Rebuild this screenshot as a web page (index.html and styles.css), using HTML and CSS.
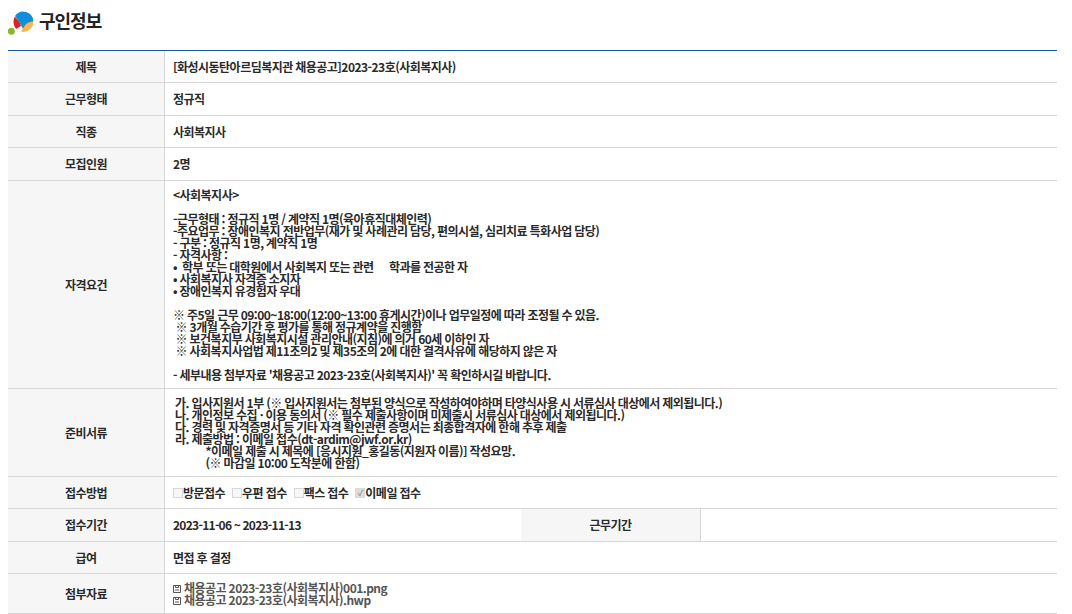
FILE: index.html
```html
<!DOCTYPE html>
<html lang="ko">
<head>
<meta charset="utf-8">
<title>구인정보</title>
<link rel="stylesheet" href="styles.css">
</head>
<body>
<h1 class="title">
<svg class="logo" width="28" height="26" viewBox="0 0 28 26"><circle cx="3.300" cy="20.300" r="3.500" fill="#8db52f"/><circle cx="15.300" cy="11" r="10" fill="#fbb450"/><path d="M7 5A10 10 0 0 1 25.300 10.500C20 10 16.500 14 15 18 13 13 10 9 7 5Z" fill="#0f8fdc"/><path d="M6.500 6C5 10 5.500 15 8.500 18 10 18 12 17.500 13 15 12 11 9 8 6.500 6Z" fill="#d9202c"/><path d="M8 18C9.500 19.500 11.500 20.700 13 21 13.500 19 14 18 15 18L13 15Z" fill="#fff"/></svg>
<span>구인정보</span>
</h1>
<table class="info">
<colgroup><col class="c1"><col class="c2"><col class="c3"><col class="c4"></colgroup>
<tbody>
<tr class="r32"><th>제목</th><td colspan="3">[화성시동탄아르딤복지관 채용공고]2023-23호(사회복지사)</td></tr>
<tr class="r33"><th>근무형태</th><td colspan="3">정규직</td></tr>
<tr class="r32"><th>직종</th><td colspan="3">사회복지사</td></tr>
<tr class="r33"><th>모집인원</th><td colspan="3">2명</td></tr>
<tr class="r208"><th>자격요건</th><td colspan="3" class="pre">&lt;사회복지사&gt;

-근무형태 : 정규직 1명 / 계약직 1명(육아휴직대체인력)
-주요업무 : 장애인복지 전반업무(재가 및 사례관리 담당, 편의시설, 심리치료 특화사업 담당)
- 구분 : 정규직 1명, 계약직 1명
- 자격사항 :
•  학부 또는 대학원에서 사회복지 또는 관련      학과를 전공한 자
• 사회복지사 자격증 소지자
• 장애인복지 유경험자 우대

※ 주5일 근무 09:00~18:00(12:00~13:00 휴게시간)이나 업무일정에 따라 조정될 수 있음.
 ※ 3개월 수습기간 후 평가를 통해 정규계약을 진행함
 ※ 보건복지부 사회복지시설 관리안내(지침)에 의거 60세 이하인 자
 ※ 사회복지사업법 제11조의2 및 제35조의 2에 대한 결격사유에 해당하지 않은 자

- 세부내용 첨부자료 '채용공고 2023-23호(사회복지사)' 꼭 확인하시길 바랍니다.</td></tr>
<tr class="r88"><th>준비서류</th><td colspan="3" class="pre docs">가. 입사지원서 1부 (※ 입사지원서는 첨부된 양식으로 작성하여야하며 타양식사용 시 서류심사 대상에서 제외됩니다.)
나. 개인정보 수집 · 이용 동의서 (※ 필수 제출사항이며 미제출시 서류심사 대상에서 제외됩니다.)
다. 경력 및 자격증명서 등 기타 자격 확인관련 증명서는 최종합격자에 한해 추후 제출
라. 제출방법 : 이메일 접수(dt-ardim@jwf.or.kr)
            *이메일 제출 시 제목에 [응시지원_홍길동(지원자 이름)] 작성요망.
            (※ 마감일 10:00 도착분에 한함)</td></tr>
<tr class="r32"><th>접수방법</th><td colspan="3"><span class="checks"><label class="check"><span class="box"></span>방문접수</label><label class="check"><span class="box"></span>우편 접수</label><label class="check"><span class="box"></span>팩스 접수</label><label class="check"><span class="box on">✓</span>이메일 접수</label></span></td></tr>
<tr class="r33"><th>접수기간</th><td class="date">2023-11-06 ~ 2023-11-13</td><th class="side">근무기간</th><td></td></tr>
<tr class="r32"><th>급여</th><td colspan="3">면접 후 결정</td></tr>
<tr class="r40"><th>첨부자료</th><td colspan="3" class="files">
<a class="file"><svg class="fi" width="8" height="8" viewBox="0 0 8 8"><path d="M.5.500h7v7h-7zM2.500.500v2h3v-2M2 5h4" fill="none" stroke="#555"/></svg>채용공고 2023-23호(사회복지사)001.png</a>
<a class="file"><svg class="fi" width="8" height="8" viewBox="0 0 8 8"><path d="M.5.500h7v7h-7zM2.500.500v2h3v-2M2 5h4" fill="none" stroke="#555"/></svg>채용공고 2023-23호(사회복지사).hwp</a>
</td></tr>
</tbody>
</table>
</body>
</html>
```
FILE: styles.css
```css
html, body { margin: 0; padding: 0; background: #fff; }
body {
  width: 1072px;
  height: 614px;
  overflow: hidden;
  font-family: "Noto Sans CJK KR", "Noto Sans", sans-serif;
  font-size: 12px;
  color: #2a2a2a;
}
.title {
  display: flex;
  align-items: center;
  gap: 3px;
  height: 50px;
  margin: 0;
  padding: 0 0 0 8px;
  box-sizing: border-box;
  font-size: 18px;
  font-weight: 700;
  color: #222;
  letter-spacing: -1px;
}
.title span { position: relative; top: -5px; }
.logo { margin-top: -2px; }
.info {
  width: 1049px;
  margin-left: 8px;
  border-collapse: separate;
  border-spacing: 0;
  table-layout: fixed;
  border-top: 1px solid #1a5a9e;
  line-height: 12px;
}
.c1 { width: 157px; }
.c3 { width: 180px; }
.c4 { width: 356px; }
th, td {
  padding: 0;
  border-bottom: 1px solid #d6d6d6;
  box-sizing: border-box;
  font-weight: 700;
  letter-spacing: -0.52px;
  word-spacing: -0.3px;
}
th { background: #f6f6f6; text-align: center; border-right: 1px solid #d6d6d6; }
td { padding-left: 8px; background: #fff; }
th.side { padding: 0; }
.date { letter-spacing: -0.72px; }
.r32 { height: 32px; }
.r33 { height: 33px; }
.r40 { height: 40px; }
.r88 { height: 88px; }
.r208 { height: 208px; }
.pre { white-space: pre-wrap; }
.docs { padding-left: 10px; }
.checks { display: flex; gap: 7px; }
.check { display: inline-flex; align-items: center; }
.box {
  width: 8px;
  height: 8px;
  border: 1px solid #d8d8d8;
  background: #f7f7f7;
  font-size: 8px;
  line-height: 8px;
  color: #aaa;
  text-align: center;
}
.box.on { background: #ddd; color: #999; }
.file { display: block; color: #555; }
.fi { margin: 0 3px 0 0; }
```
